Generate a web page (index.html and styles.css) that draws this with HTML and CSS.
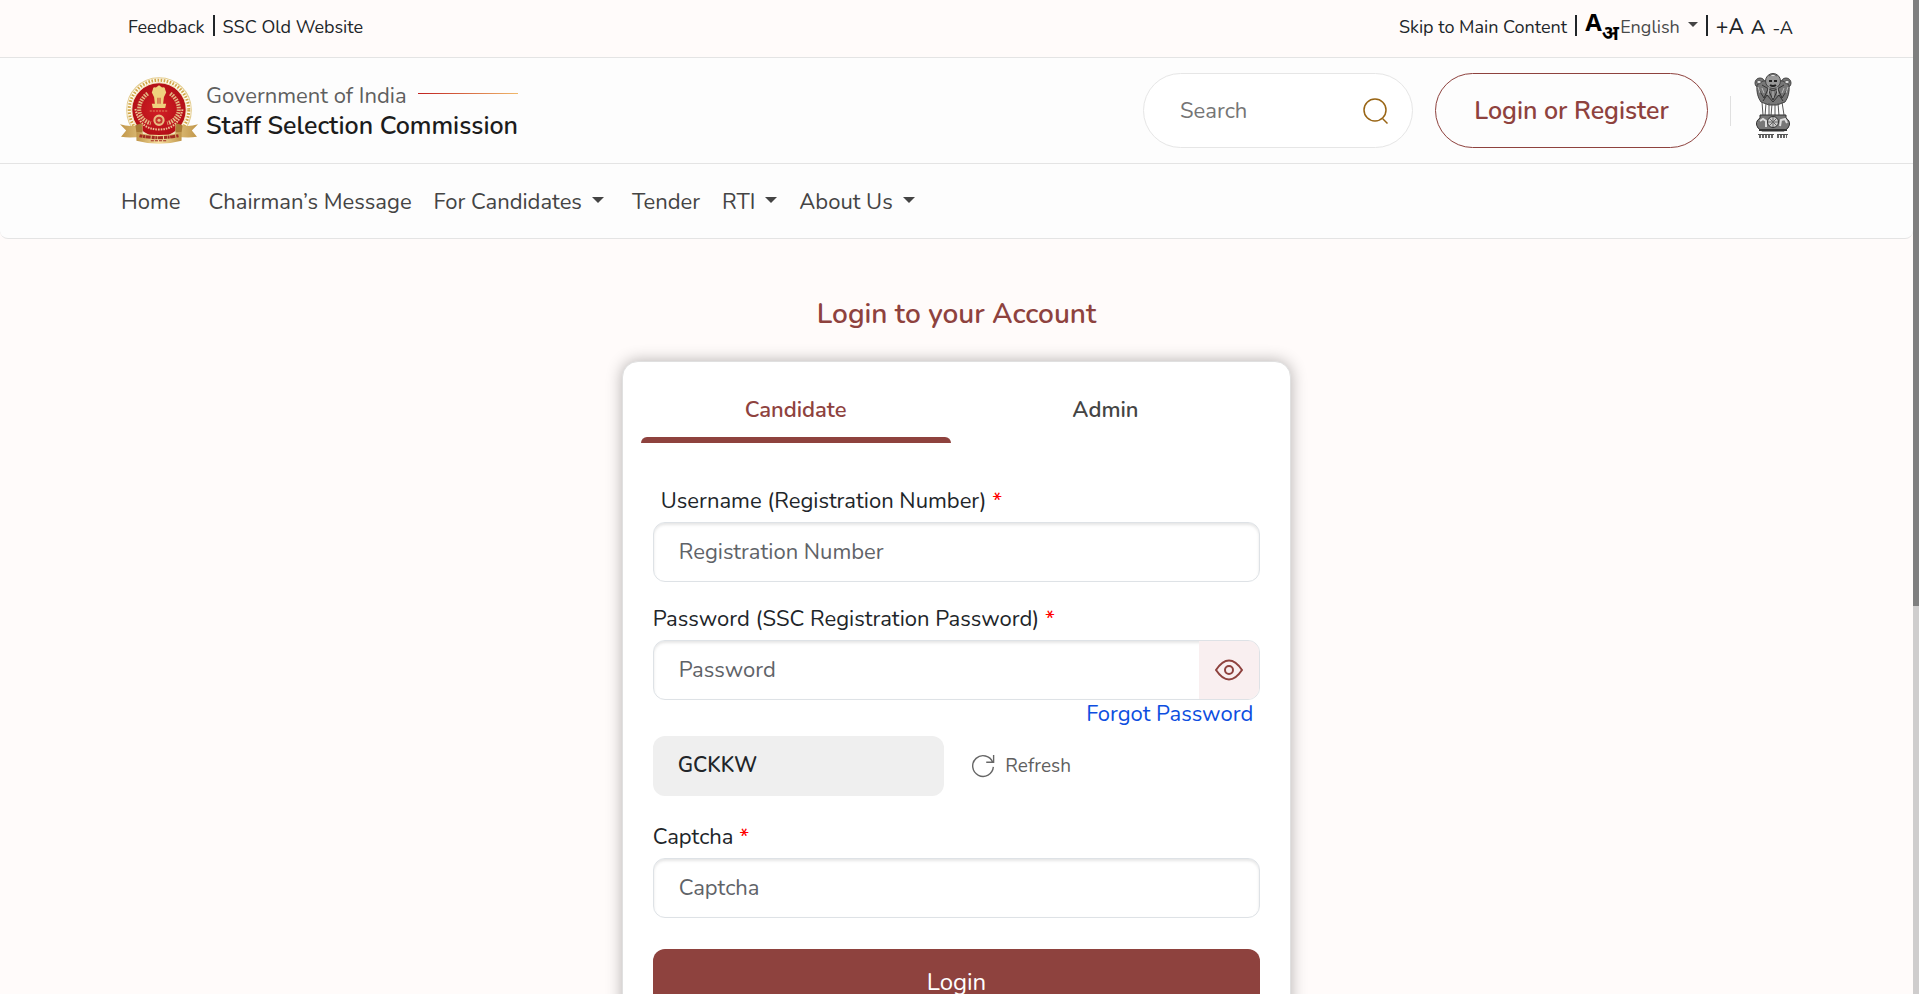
FILE: index.html
```html
<!DOCTYPE html>
<html lang="en">
<head>
    <meta charset="UTF-8">
    <meta name="viewport" content="width=device-width, initial-scale=1.0">
    <title>Staff Selection Commission | Login</title>
    <link rel="stylesheet" href="styles.css">
</head>
<body>

    <div class="page">
        <div class="topbar">
            <div class="links">
                <a href="#">Feedback</a>
                <span class="bar"></span>
                <a href="#">SSC Old Website</a>
            </div>
            <div class="links">
                <a href="#main">Skip to Main Content</a>
                <span class="bar"></span>
                <button class="lang" type="button">
                    <span class="lang-icon"><b>A</b><b class="hindi">अ</b></span>
                    <span>English</span>
                    <span class="caret"></span>
                </button>
                <span class="bar"></span>
                <div class="sizes">
                    <button class="big" type="button">+A</button>
                    <button class="mid" type="button">A</button>
                    <button type="button">-A</button>
                </div>
            </div>
        </div>

        <header class="header">
            <a class="brand" href="#">
                <svg class="logo" viewBox="0 0 76 66">
                    <defs>
                        <linearGradient id="gold" x1="0" x2="1">
                            <stop offset="0" stop-color="#c09548"/>
                            <stop offset=".5" stop-color="#f6dfa0"/>
                            <stop offset="1" stop-color="#c09548"/>
                        </linearGradient>
                        <radialGradient id="red">
                            <stop offset="0" stop-color="#d21f26"/>
                            <stop offset="1" stop-color="#b30f17"/>
                        </radialGradient>
                    </defs>
                    <circle cx="38" cy="32" r="31.500" fill="#fffaf0" stroke="#e3cc8e"/>
                    <circle cx="38" cy="32" r="29" fill="none" stroke="#d0a748" stroke-width="3" stroke-dasharray="1.600 1.400"/>
                    <circle cx="38" cy="32" r="26.500" fill="url(#red)" stroke="#f3e3b8"/>
                    <path d="M27 16c-12 9-11 25 3 29M49 16c12 9 11 25-3 29" fill="none" stroke="#e3b883" stroke-width="4" stroke-dasharray="1.600 1"/>
                    <path d="M32 12q0-3 3-2l3-2 3 2q3-1 3 2l1 3-2 4h-10l-2-4zM33 18h10l-1 8h-8zM31 26h14l-1 4h-12z" fill="#efd17e"/>
                    <path d="M37 20v6M39 20v6" stroke="#c6362d"/>
                    <path d="M29 33h18" stroke="#e08a5c" stroke-dasharray="2 1"/>
                    <circle cx="38" cy="42" r="4.500" fill="#c6362d" stroke="#e8bd83" stroke-width="2"/>
                    <circle cx="38" cy="42" r="1.500" fill="#e8bd83"/>
                    <path d="M15 31q4 20 23 20q19 0 23-20" fill="none" stroke="#edc193" stroke-width="2" stroke-dasharray="1.500 1"/>
                    <path d="M0 46q10 3 22 0v11q-10 3-21 1l5-6zM76 46q-10 3-22 0v11q10 3 21 1l-5-6z" fill="url(#gold)"/>
                    <path d="M16 54l-1-7 6-2 1 9zM60 54l1-7-6-2-1 9z" fill="#a87a35"/>
                    <path d="M16 54q22 5 44 0v8q-22 6-44 0z" fill="url(#gold)"/>
                    <path d="M19 57q19 4 38 0" fill="none" stroke="#a22a20" stroke-width="3" stroke-dasharray="3 .500 2 .500 5 1"/>
                    <path d="M30 62h16" stroke="#a22a20" stroke-dasharray="3 1"/>
                </svg>
                <span class="brand-text">
                    <span class="gov">Government of India <i></i></span>
                    <strong>Staff Selection Commission</strong>
                </span>
            </a>
            <div class="actions">
                <form class="search">
                    <input type="search" placeholder="Search" aria-label="Search">
                    <button type="submit" aria-label="Search">
                        <svg viewBox="0 0 26 26"><circle cx="12" cy="12" r="11"/><path d="M19.500 20.500l5 5"/></svg>
                    </button>
                </form>
                <button class="login-register" type="button">Login or Register</button>
                <span class="divider"></span>
                <svg class="emblem" viewBox="0 0 38 66">
                    <g fill="#777" stroke="#444">
                        <circle cx="6" cy="10" r="5"/>
                        <circle cx="32" cy="10" r="5"/>
                        <path d="M3 12q-1 10 4 17l8 3h8l8-3q5-7 4-17l-6-4h-20z"/>
                        <circle cx="19" cy="8" r="7.500" fill="#999"/>
                    </g>
                    <path d="M5 17l5 8 4-9 5 11 5-11 4 9 5-8M8 12l5 3 6 3 6-3 5-3M9 28l4-6 6 7 6-7 4 6" fill="none" stroke="#333"/>
                    <path d="M4 14l2 6M8 15l2 5M34 14l-2 6M30 15l-2 5M15 14l-1 8M23 14l1 8M19 18v7" stroke="#bbb"/>
                    <path d="M2 9l3-2 3 2-3 2zM30 9l3-2 3 2-3 2zM15 3l4-2 4 2" fill="#ddd" stroke="#555"/>
                    <path d="M15 8h3M20 8h3M16 12q3 2 6 0" fill="none" stroke="#222" stroke-width="2"/>
                    <path d="M8 29l1 13M12 30l-1 13M15 30v13M18 31l-1 12M21 31v12M24 30l1 13M28 29l2 13" fill="none" stroke="#555"/>
                    <path d="M6 42h26v3q6 4 2 10l-4 3h-22l-4-3q-4-6 2-10z" fill="#777" stroke="#333"/>
                    <circle cx="19" cy="49" r="5.500" fill="#ccc" stroke="#333"/>
                    <path d="M19 44v10M14 49h10M15 45l8 8M15 53l8-8" stroke="#666"/>
                    <path d="M6 48l3-2 3 2v6M26 53l1-6 4-1 2 4" fill="none" stroke="#ddd" stroke-width="2"/>
                    <path d="M5 57h28" stroke="#333" stroke-width="2"/>
                    <path d="M4 61.500h16M23 61.500h11" stroke="#555"/>
                    <path d="M5 63.500h14M23 63.500h10" stroke="#666" stroke-width="3" stroke-dasharray="2 1"/>
                </svg>
            </div>
        </header>

        <nav class="nav">
            <ul>
                <li class="wide"><a href="#">Home</a></li>
                <li><a href="#">Chairman’s Message</a></li>
                <li class="wide"><a href="#">For Candidates <span class="caret"></span></a></li>
                <li><a href="#">Tender</a></li>
                <li><a href="#">RTI <span class="caret"></span></a></li>
                <li><a href="#">About Us <span class="caret"></span></a></li>
            </ul>
        </nav>

        <main class="main" id="main">
            <h1>Login to your Account</h1>
            <div class="card">
                <div class="tabs" role="tablist">
                    <button class="tab active" type="button" role="tab" aria-selected="true">Candidate</button>
                    <button class="tab" type="button" role="tab" aria-selected="false">Admin</button>
                </div>
                <form class="form">
                    <label class="indent" for="username">Username (Registration Number) <em>*</em></label>
                    <input class="field" id="username" type="text" placeholder="Registration Number">

                    <label for="password">Password (SSC Registration Password) <em>*</em></label>
                    <div class="password">
                        <input id="password" type="password" placeholder="Password">
                        <button type="button" aria-label="Show password">
                            <svg viewBox="0 0 28 22"><path d="M1 11C5 5 9 1.500 14 1.500S23 5 27 11C23 17 19 20.500 14 20.500S5 17 1 11z"/><circle cx="14" cy="11" r="4"/></svg>
                        </button>
                    </div>
                    <a class="forgot" href="#">Forgot Password</a>

                    <div class="captcha">
                        <span class="code">GCKKW</span>
                        <button class="refresh" type="button">
                            <svg viewBox="0 0 26 26"><path d="M23.500 9A11.200 11.200 0 1 0 24.200 14M24.500 1v8h-8"/></svg>
                            Refresh
                        </button>
                    </div>

                    <label for="captcha">Captcha <em>*</em></label>
                    <input class="field" id="captcha" type="text" placeholder="Captcha">

                    <button class="submit" type="submit">Login</button>
                </form>
            </div>
        </main>
    </div>
    <div class="scroll"><span></span></div>

</body>
</html>
```
FILE: styles.css
```css
*{
    box-sizing: border-box;
}
body{
    margin: 0;
    height: 100vh;
    display: flex;
    overflow: hidden;
    background-color: #fffbfa;
    color: #212529;
    font-family: Nunito, Lato, "Noto Sans", sans-serif;
    font-size: 22px;
}
a{
    color: inherit;
    text-decoration: none;
}
button, input{
    font: inherit;
    color: inherit;
    border: 0;
    padding: 0;
    background: none;
}
input{
    min-width: 0;
}
input::placeholder{
    color: #5f6368;
    opacity: 1;
}
svg{
    display: block;
    flex: none;
}
.page{
    flex: 1;
    min-width: 0;
}

/* top bar */
.topbar{
    display: flex;
    justify-content: space-between;
    height: 58px;
    padding: 0 120px 4px 128px;
    border-bottom: 1px solid #e4e4e4;
    font-size: 18px;
}
.links{
    display: flex;
    align-items: center;
    gap: 8px;
}
.bar{
    width: 2px;
    height: 21px;
    margin-bottom: 2px;
    background-color: #212529;
}
.caret{
    display: inline-block;
    margin-bottom: 4px;
    border-top: 6px solid #444;
    border-left: 6px solid transparent;
    border-right: 6px solid transparent;
}
.lang{
    display: flex;
    align-items: center;
    color: #494949;
}
.lang .caret{
    margin-left: 8px;
    border-width: 5px;
    border-bottom: 0;
}
.lang-icon{
    display: flex;
    width: 35px;
    height: 32px;
    color: #000;
    font-family: "Liberation Sans Narrow", "Open Sans", "Noto Sans", sans-serif;
    font-size: 24px;
    line-height: 22px;
}
.lang-icon .hindi{
    padding-top: 12px;
    font-size: 20px;
    line-height: 20px;
}
.sizes{
    display: flex;
    align-items: baseline;
    gap: 7px;
    font-weight: 500;
}
.sizes .big{
    font-size: 21px;
}
.sizes .mid{
    font-size: 20px;
}

/* header */
.header{
    display: flex;
    align-items: center;
    justify-content: space-between;
    height: 106px;
    padding: 0 120px;
    background-color: #fdfdfd;
    border-bottom: 1px solid #e4e4e4;
}
.brand{
    display: flex;
    align-items: center;
    gap: 8px;
}
.logo{
    width: 78px;
    height: 68px;
}
.brand-text{
    display: flex;
    flex-direction: column;
    line-height: 30px;
}
.brand-text strong{
    color: #1c1c1c;
    font-size: 25px;
    font-weight: 600;
}
.gov{
    display: flex;
    align-items: center;
    justify-content: space-between;
    color: #5f5f5f;
}
.gov i{
    width: 100px;
    height: 1px;
    margin-bottom: 4px;
    background: linear-gradient(to right, #c0201f, #f0b96b);
}
.actions{
    display: flex;
    align-items: center;
    gap: 22px;
}
.search{
    display: flex;
    align-items: center;
    width: 270px;
    height: 75px;
    padding: 0 23px 0 36px;
    background-color: #fff;
    border: 1px solid #e6e6e6;
    border-radius: 38px;
}
.search input{
    flex: 1;
    outline: 0;
}
.search input::placeholder{
    color: #757575;
}
.search svg{
    width: 26px;
    height: 26px;
    fill: none;
    stroke: #996515;
    stroke-width: 1.5;
}
.login-register{
    width: 273px;
    height: 75px;
    border: 1px solid #8e423e;
    border-radius: 38px;
    color: #8e423e;
    font-size: 25px;
    font-weight: 600;
}
.divider{
    width: 1px;
    height: 30px;
    background-color: #e0e0e0;
}
.emblem{
    width: 40px;
    height: 66px;
    margin-bottom: 10px;
}

/* menu */
.nav{
    height: 75px;
    padding: 2px 121px 0;
    background-color: #fdfdfd;
    border-bottom: 1px solid #e4e4e4;
    border-radius: 0 0 8px 8px;
    color: #444;
}
.nav ul{
    display: flex;
    align-items: center;
    gap: 22px;
    height: 100%;
    margin: 0;
    padding: 0;
    list-style: none;
}
.nav .wide{
    padding-right: 6px;
}
.nav a{
    display: flex;
    align-items: center;
    gap: 10px;
}

/* login card */
.main{
    display: flex;
    flex-direction: column;
    align-items: center;
    padding-top: 56px;
}
.main h1{
    margin: 0 0 28px;
    color: #8e423e;
    font-size: 28px;
    line-height: 38px;
    font-weight: 600;
}
.card{
    width: 35%;
    min-width: 600px;
    padding: 18px 18px 40px;
    background-color: #fff;
    border: 1px solid #e0e0e0;
    border-radius: 16px;
    box-shadow: 0 0 16px rgba(0, 0, 0, 0.3);
}
.tabs{
    display: flex;
    padding-right: 12px;
}
.tab{
    flex: 1;
    display: grid;
    grid-template-rows: 1fr 6px;
    align-items: center;
    height: 63px;
    padding-top: 2px;
    color: #444;
    font-weight: 600;
}
.tab.active{
    color: #8e423e;
}
.tab.active::after{
    content: "";
    height: 6px;
    border-radius: 6px 6px 0 0;
    background-color: #8e423e;
}
.form{
    display: flex;
    flex-direction: column;
    padding: 43px 12px 0;
}
.form label{
    line-height: 30px;
    margin-bottom: 6px;
}
.form .indent{
    padding-left: 8px;
}
.form em{
    color: #f00;
    font-style: normal;
    font-weight: 500;
}
.field, .password{
    height: 60px;
    margin-bottom: 22px;
    background-color: #fff;
    border: 1px solid #dee2e6;
    border-radius: 12px;
    box-shadow: inset 0 2px 3px rgba(0, 0, 0, 0.1);
}
.field, .password input{
    padding: 0 25px;
}
.password{
    display: flex;
    margin-bottom: 0;
    overflow: hidden;
}
.password input{
    flex: 1;
}
.password button{
    display: flex;
    align-items: center;
    justify-content: center;
    width: 60px;
    background-color: #f9eff0;
}
.password svg{
    width: 28px;
    height: 22px;
    fill: none;
    stroke: #8e423e;
    stroke-width: 2;
}
.forgot{
    align-self: flex-end;
    padding-right: 7px;
    color: #0d4ee0;
    line-height: 28px;
}
.captcha{
    display: flex;
    align-items: center;
    gap: 27px;
    margin: 8px 0 26px;
}
.code{
    width: 48%;
    height: 60px;
    padding-left: 25px;
    background-color: #efefef;
    border-radius: 12px;
    font-size: 21px;
    line-height: 58px;
    font-weight: 600;
}
.refresh{
    display: flex;
    align-items: center;
    gap: 10px;
    color: #5f5f5f;
    font-size: 19px;
}
.refresh svg{
    width: 24px;
    height: 24px;
    fill: none;
    stroke: #666;
    stroke-width: 1.5;
}
.submit{
    height: 66px;
    margin-top: 9px;
    background-color: #8e423e;
    border-radius: 12px;
    color: #fff;
    font-size: 24px;
}

/* scroll track */
.scroll{
    width: 6px;
    background-color: #cfcdcd;
}
.scroll span{
    display: block;
    height: 61%;
    background-color: #7f7f7f;
}
```
